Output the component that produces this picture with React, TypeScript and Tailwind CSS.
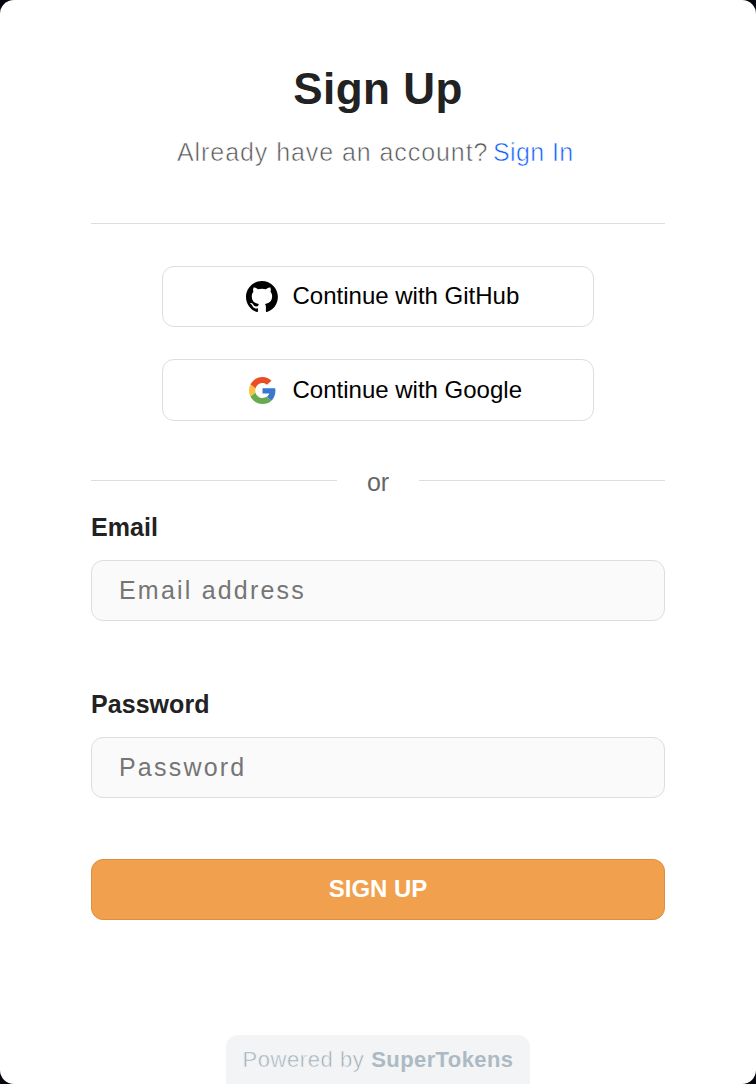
import { useState } from "react";

function GitHubIcon() {
  return (
    <svg width="32" height="31" viewBox="0 0 98 96" preserveAspectRatio="none" fill="#000" aria-hidden="true">
      <path d="M48.854 0C21.839 0 0 22 0 49.217c0 21.756 13.993 40.172 33.405 46.69 2.427.49 3.316-1.059 3.316-2.362 0-1.141-.08-5.052-.08-9.127-13.59 2.934-16.42-5.867-16.42-5.867-2.184-5.704-5.42-7.17-5.42-7.17-4.448-3.015.324-3.015.324-3.015 4.934.326 7.523 5.052 7.523 5.052 4.367 7.496 11.404 5.378 14.235 4.074.404-3.178 1.699-5.378 3.074-6.6-10.839-1.141-22.243-5.378-22.243-24.283 0-5.378 1.94-9.778 5.014-13.2-.485-1.222-2.184-6.275.486-13.038 0 0 4.125-1.304 13.426 5.052a46.97 46.97 0 0 1 12.214-1.63c4.125 0 8.33.571 12.213 1.63 9.302-6.356 13.427-5.052 13.427-5.052 2.67 6.763.97 11.816.485 13.038 3.155 3.422 5.015 7.822 5.015 13.2 0 18.905-11.404 23.06-22.324 24.283 1.78 1.548 3.316 4.481 3.316 9.126 0 6.6-.08 11.897-.08 13.526 0 1.304.89 2.853 3.316 2.364 19.412-6.52 33.405-24.935 33.405-46.691C97.707 22 75.788 0 48.854 0z" />
    </svg>
  );
}

function GoogleIcon() {
  return (
    <svg width="27" height="27" viewBox="0 0 48 48" aria-hidden="true">
      <path fill="#ea4e26" d="M24 10.8c3.1 0 5.7 1.1 7.8 3l8.26-6.95C35.9 2.38 30.47 0 24 0 14.62 0 6.51 5.38 2.56 13.22l9.1 7.1C13.4 14.6 18.2 10.8 24 10.8z" />
      <path fill="#3a78d0" d="M46.98 24.55c0-1.57-.15-3.09-.38-4.55H24v9.4h12c-.6 2.4-2.1 4.4-4.4 5.9l8.29 6.9c4.51-4.18 7.09-10.36 7.09-17.65z" />
      <path fill="#f7c244" d="M11.7 27.8c-.4-1.2-.6-2.5-.6-3.8s.2-2.6.6-3.8l-9.14-6.98C.92 16.46 0 20.12 0 24c0 3.88.92 7.54 2.56 10.78l9.14-6.98z" />
      <path fill="#66ab50" d="M24 48c6.48 0 11.93-2.13 15.89-5.81l-8.29-6.89c-2 1.2-4.5 1.9-7.6 1.9-5.8 0-10.6-3.8-12.3-9.4l-9.14 6.98C6.51 42.62 14.62 48 24 48z" />
    </svg>
  );
}

function GitHubButton() {
  return (
    <button className="flex h-[61px] w-[432px] items-center rounded-[12px] border border-[#dddddd] bg-white pl-[82px] text-[24px] leading-none text-black">
      <span className="flex w-[34px] justify-center">
        <GitHubIcon />
      </span>
      <span className="ml-[13.5px] pb-[2px]">Continue with GitHub</span>
    </button>
  );
}

function GoogleButton() {
  return (
    <button className="flex h-[62px] w-[432px] items-center rounded-[12px] border border-[#dddddd] bg-white pl-[82px] text-[24px] leading-none text-black">
      <span className="flex w-[34px] justify-center">
        <GoogleIcon />
      </span>
      <span className="ml-[13.5px]">Continue with Google</span>
    </button>
  );
}

function Field({ id, label, type, placeholder }: { id: string; label: string; type: string; placeholder: string }) {
  const [value, setValue] = useState("");
  return (
    <div>
      <label htmlFor={id} className="block h-[30px] text-[25px] leading-[30px] font-bold tracking-[0.05px] text-[#222222]">
        {label}
      </label>
      <input
        id={id}
        type={type}
        value={value}
        onChange={(e) => setValue(e.target.value)}
        placeholder={placeholder}
        className="mt-[18px] block h-[61px] w-full rounded-[12px] border border-[#dddddd] bg-[#fafafa] px-[27px] text-[25px] tracking-[2.2px] text-[#222222] outline-none placeholder:text-[#757575]"
      />
    </div>
  );
}

export default function App() {
  return (
    <div className="h-[1084px] w-[756px] bg-[#05060e] font-['Liberation_Sans',Arial,sans-serif]">
      <main className="flex h-full flex-col items-center overflow-hidden rounded-[14px] bg-white px-[91px] pt-[64px]">
        <h1 className="h-[50px] text-[44px] leading-[50px] font-bold tracking-[0.5px] text-[#222222]">Sign Up</h1>
        <p className="mt-[23px] flex h-[30px] w-full pl-[86px] text-[25px] leading-[30px] whitespace-nowrap text-[#555555] [-webkit-text-stroke:0.6px_white]">
          <span className="w-[316px] tracking-[0.93px]">Already have an account?</span>
          <a href="#" className="tracking-[0.4px] text-[#1060ff]">Sign In</a>
        </p>
        <hr className="mt-[56px] w-full border-0 border-t border-[#dddddd]" />
        <div className="mt-[42px] flex flex-col gap-[32px]">
          <GitHubButton />
          <GoogleButton />
        </div>
        <div className="mt-[45px] flex h-[32px] w-full justify-between">
          <div className="mt-[14px] h-px w-[246px] bg-[#dddddd]" />
          <span className="text-[25px] leading-[32px] text-[#666666]">or</span>
          <div className="mt-[14px] h-px w-[246px] bg-[#dddddd]" />
        </div>
        <form className="mt-[14px] flex w-full flex-col gap-[68px]" onSubmit={(e) => e.preventDefault()}>
          <Field id="email" label="Email" type="email" placeholder="Email address" />
          <Field id="password" label="Password" type="password" placeholder="Password" />
          <button className="-mt-[7px] h-[61px] w-full rounded-[12px] border border-[#dc8f42] bg-[#f1a14d] pb-[2px] text-[24px] leading-none font-bold tracking-[-0.05px] text-white">
            SIGN UP
          </button>
        </form>
        <footer className="mt-auto flex h-[49px] w-[304px] justify-center gap-[7px] rounded-t-[12px] bg-[#f2f4f6] pt-[10px] text-[22px] leading-[30px] whitespace-nowrap text-[#adbac3]">
          <span className="tracking-[0.55px] text-[#9aabb3] [-webkit-text-stroke:0.6px_#f2f4f6]">Powered by</span>
          <strong className="tracking-[0.4px]">SuperTokens</strong>
        </footer>
      </main>
    </div>
  );
}
